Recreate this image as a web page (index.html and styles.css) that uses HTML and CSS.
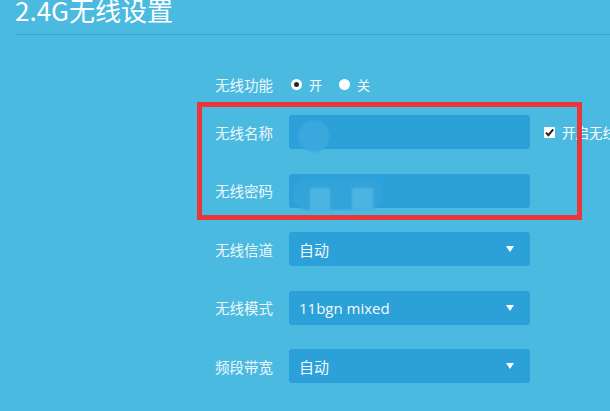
FILE: index.html
```html
<!DOCTYPE html>
<html lang="zh-CN">
<head>
<meta charset="utf-8">
<title>2.4G无线设置</title>
<link rel="stylesheet" href="styles.css">
</head>
<body>
<div class="page">
  <div class="header">
    <h1 class="title">2.4G无线设置</h1>
  </div>
  <div class="form">
    <div class="row radio-row">
      <div class="label">无线功能</div>
      <div class="radios">
        <span class="radio checked"></span><span class="radio-text">开</span>
        <span class="radio"></span><span class="radio-text">关</span>
      </div>
    </div>
    <div class="row">
      <div class="label">无线名称</div>
      <div class="field">
        <span class="blur blur-circle"></span>
      </div>
      <span class="checkbox">
        <svg width="11" height="11" viewBox="0 0 11 11"><path d="M2 5.6 L4.4 8.2 L9.2 2.4" fill="none" stroke="#222" stroke-width="2"/></svg>
      </span>
      <span class="check-text">开启无线广播</span>
    </div>
    <div class="row">
      <div class="label">无线密码</div>
      <div class="field">
        <span class="blur blur-pill"></span>
        <span class="blur blur-bar bar-a"></span>
        <span class="blur blur-bar bar-b"></span>
      </div>
    </div>
    <div class="row">
      <div class="label">无线信道</div>
      <div class="field select"><span class="value">自动</span><span class="arrow"></span></div>
    </div>
    <div class="row">
      <div class="label">无线模式</div>
      <div class="field select"><span class="value">11bgn mixed</span><span class="arrow"></span></div>
    </div>
    <div class="row">
      <div class="label">频段带宽</div>
      <div class="field select"><span class="value">自动</span><span class="arrow"></span></div>
    </div>
  </div>
  <div class="highlight"></div>
</div>
</body>
</html>
```
FILE: styles.css
```css
html, body {
  margin: 0;
  padding: 0;
}
body {
  background: #4bbae1;
  font-family: "Open Sans", "Noto Sans CJK SC", sans-serif;
  color: #ffffff;
  overflow: hidden;
}
.page {
  position: relative;
  width: 610px;
  height: 411px;
  overflow: hidden;
}
.header {
  display: flow-root;
  margin-left: 15px;
  height: 34px;
  border-bottom: 1px solid #34a5d4;
}
.title {
  margin: 0;
  margin-top: -7px;
  font-family: "Noto Sans CJK SC", sans-serif;
  font-weight: 400;
  font-size: 26px;
  line-height: 34px;
  color: #ffffff;
  white-space: nowrap;
}
.form {
  margin-left: 215px;
  margin-top: 39px;
  display: flex;
  flex-direction: column;
  gap: 24.5px;
}
.row {
  display: flex;
  align-items: center;
  height: 34px;
  white-space: nowrap;
}
.radio-row {
  height: 20px;
  margin-bottom: -3.5px;
}
.label {
  flex-shrink: 0;
  width: 74px;
  font-size: 14.5px;
  color: #eef8fc;
}
.radios {
  display: flex;
  align-items: center;
  margin-left: 2px;
}
.radio {
  width: 11px;
  height: 11px;
  border-radius: 50%;
  background: #ffffff;
  display: flex;
  align-items: center;
  justify-content: center;
}
.radio.checked::after {
  content: "";
  width: 5px;
  height: 5px;
  border-radius: 50%;
  background: #1e2a30;
}
.radio-text {
  font-size: 13px;
  margin-left: 7px;
  margin-right: 17px;
}
.field {
  flex-shrink: 0;
  position: relative;
  width: 241px;
  height: 34px;
  background: #2ba0d9;
  border-radius: 3px;
  display: flex;
  align-items: center;
  padding-left: 10px;
  box-sizing: border-box;
}
.select .value {
  font-size: 15px;
  color: #f4fbfe;
}
.arrow {
  position: absolute;
  right: 16px;
  top: 14px;
  width: 0;
  height: 0;
  border-left: 4.5px solid transparent;
  border-right: 4.5px solid transparent;
  border-top: 6px solid #ffffff;
}
.blur {
  position: absolute;
  filter: blur(0.8px);
}
.blur-circle {
  left: 9px;
  top: 5px;
  width: 32px;
  height: 32px;
  border-radius: 50%;
  background: #3aa8dc;
}
.blur-pill {
  left: 3px;
  top: 4px;
  width: 91px;
  height: 32px;
  border-radius: 16px;
  background: #33a4da;
}
.blur-bar {
  top: 14px;
  height: 22px;
  background: #4db4e2;
}
.bar-a {
  left: 21px;
  width: 20px;
}
.bar-b {
  left: 63px;
  width: 21px;
}
.checkbox {
  flex-shrink: 0;
  margin-left: 14px;
  width: 11px;
  height: 11px;
  background: #ffffff;
  display: flex;
  border-radius: 1px;
}
.check-text {
  margin-left: 7px;
  font-size: 13.5px;
}
.highlight {
  position: absolute;
  left: 197px;
  top: 102px;
  width: 385px;
  height: 118px;
  box-sizing: border-box;
  border: 5.5px solid #e8363b;
}
```
